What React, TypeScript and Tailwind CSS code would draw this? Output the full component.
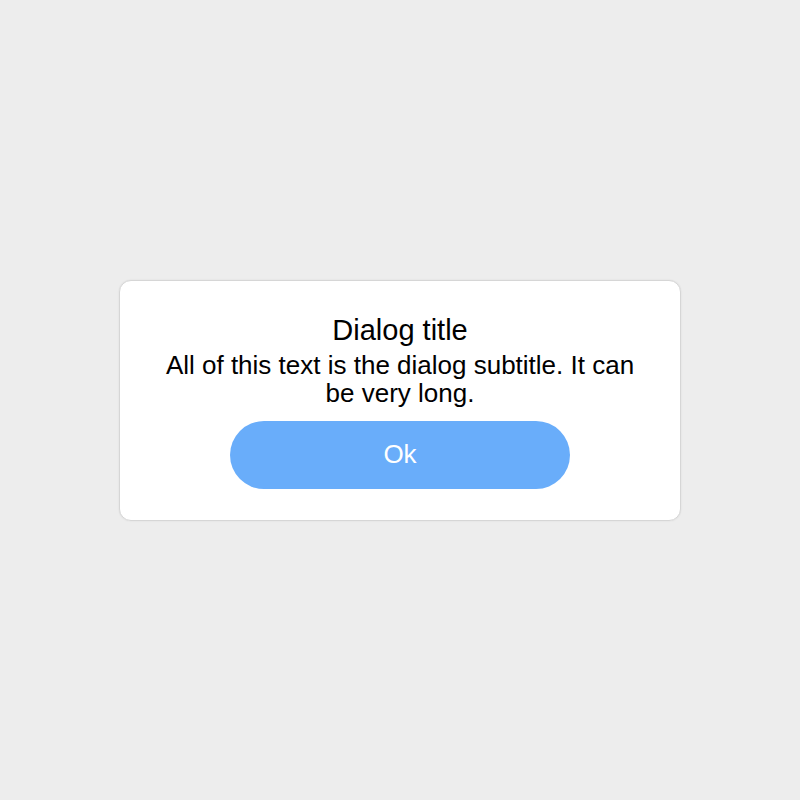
export default function App() {
  return (
    <div
      className="flex h-screen w-full items-center justify-center bg-[#ededed]"
      style={{ fontFamily: '"Liberation Sans", Arial, sans-serif' }}
    >
      {/* Dialog card */}
      <div className="flex w-[562px] flex-col items-center rounded-[12px] border border-[#d6d6d6] bg-white px-[40px] pt-[33px] pb-[31px] text-center text-black shadow-[0_0_2px_rgba(0,0,0,0.08)]">
        <h1 className="text-[29px] leading-[33px] font-normal">Dialog title</h1>
        <p className="mt-[4px] text-[26px] leading-[28px]">
          All of this text is the dialog subtitle. It can be very long.
        </p>
        <button className="mt-[14px] flex h-[68px] w-[340px] items-center justify-center rounded-full bg-[#69adfa] text-[26px] text-white">
          Ok
        </button>
      </div>
    </div>
  )
}
